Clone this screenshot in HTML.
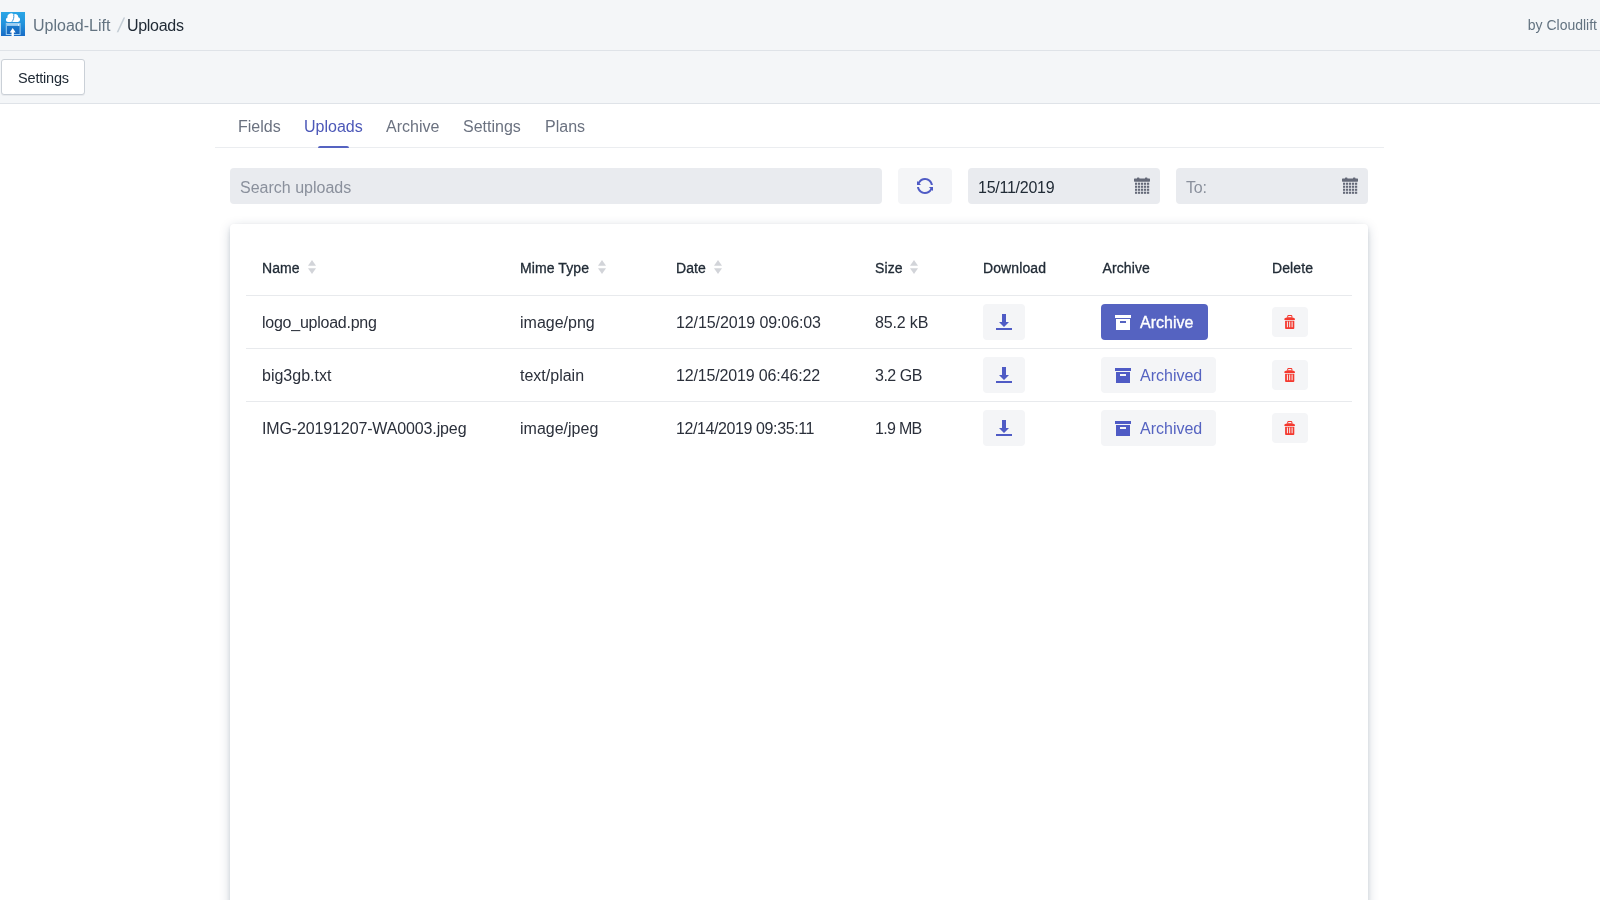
<!DOCTYPE html>
<html lang="en">
<head>
<meta charset="utf-8">
<title>Upload-Lift - Uploads</title>
<style>
*{box-sizing:border-box;margin:0;padding:0}
html,body{width:1600px;height:900px;overflow:hidden;background:#fff;font-family:"Liberation Sans",sans-serif;color:#212b36}
.topbar{position:absolute;left:0;top:0;width:1600px;height:51px;background:#f4f6f8;border-bottom:1px solid #dfe3e8}
.logo{position:absolute;left:1px;top:12px;width:24px;height:24px;background:linear-gradient(#2aa6e6,#2192dc 50%,#186cc6)}.logo svg{display:block}
.crumb{position:absolute;left:33px;top:16px;font-size:16px;line-height:20px;color:#637381;white-space:nowrap}
.crumb .sep{position:absolute;left:84.5px;top:-2px;font-size:20px;line-height:22px;color:#c4cdd5;transform:skewX(-11deg)}
.crumb b{position:absolute;left:94px;top:0;font-weight:400;color:#212b36;letter-spacing:-.3px}
.by{position:absolute;right:3px;top:15px;font-size:14px;line-height:20px;color:#637381}
.actionbar{position:absolute;left:0;top:51px;width:1600px;height:53px;background:#f4f6f8;border-bottom:1px solid #dfe3e8}
.btn-settings{position:absolute;left:1px;top:8px;width:84px;height:36px;border:1px solid #cad0d7;border-radius:3px;background:#fff;box-shadow:0 1px 0 rgba(22,29,37,.05);font-size:14.5px;line-height:36px;text-align:center;color:#212b36;padding-left:1px;letter-spacing:-.2px}
.tabs{position:absolute;left:215px;top:104px;width:1169px;height:44px;border-bottom:1px solid #ebedf0}
.tab{position:absolute;top:13px;font-size:16px;line-height:20px;color:#6b7280;white-space:nowrap}
.tab.active{color:#4c58b8}
.tab.active:after{content:"";position:absolute;left:14px;right:14px;bottom:-11px;height:2px;background:#5563c1;border-radius:2px 2px 0 0}
.search{position:absolute;left:230px;top:168px;width:652px;height:36px;background:#e9ebef;border-radius:4px;font-size:16px;line-height:40px;padding-left:10px;color:#8a909c;overflow:hidden}
.refresh{position:absolute;left:898px;top:168px;width:54px;height:36px;background:#f4f5f7;border-radius:4px}
.refresh svg{position:absolute;left:19px;top:10px}
.date{position:absolute;top:168px;width:192px;height:36px;background:#e9ebef;border-radius:4px;font-size:16px;line-height:40px;padding-left:10px;color:#212b36;letter-spacing:-.25px;overflow:hidden}
.date.to{color:#8a909c}
.date svg{position:absolute;left:166px;top:9px}
.card{position:absolute;left:230px;top:224px;width:1138px;height:700px;background:#fff;border-radius:4px;box-shadow:0 2px 4px -1px rgba(28,54,90,.16),0 3px 12px -1px rgba(28,51,84,.26)}
.th{position:absolute;top:35px;font-size:14px;line-height:18px;color:#212b36;white-space:nowrap;-webkit-text-stroke:.3px #212b36;letter-spacing:.1px}
.sort{position:absolute;top:36px;width:8px;height:14px}
.row{position:absolute;left:16px;width:1106px;height:53px;border-top:1px solid #e8eaed}
.cell{position:absolute;top:17px;font-size:16px;line-height:20px;color:#2b303b;white-space:nowrap}
.ibtn{position:absolute;background:#f4f5f7;border-radius:4px}
.dl{left:737px;top:8px;width:42px;height:36px}
.dl svg{position:absolute;left:13px;top:10px}
.ar{left:855px;top:8px;height:36px;font-size:16px;line-height:38px;color:#5563c1;padding-left:39px;white-space:nowrap}
.ar svg{position:absolute;left:14px;top:10px}
.ar.primary{width:107px;background:#5563c1;color:#fff;-webkit-text-stroke:.35px #fff}
.ar.done{width:115px}
.del{left:1026px;top:11px;width:36px;height:30px}
.del svg{position:absolute;left:12px;top:8px}
</style>
</head>
<body><div id="root" style="position:absolute;left:0;top:0;width:1600px;height:900px;will-change:transform;overflow:hidden">


<div class="topbar">
  <div class="logo"><svg width="24" height="24" viewBox="0 0 24 24"><g transform="translate(.4 -.2)"><path d="M6.600 10.200a2.300 2.300 0 0 1-.5-4.500A3.500 3.500 0 0 1 12.300 2.900a2.900 2.900 0 0 1 4.600 2.600 2.400 2.400 0 0 1-.3 4.700z" fill="#fff"/><path d="M12.300 2.900c.5 2.600-.2 5.200-1.800 7.100" fill="none" stroke="#2389d6" stroke-width=".9"/></g><rect x="5.300" y="11.500" width="13.800" height="11" fill="#0a3c9a" fill-opacity=".22" stroke="#9ccdf0" stroke-width="1"/><rect x="5.800" y="12" width="12.800" height="1.900" fill="#a2d0f1"/><rect x="17" y="12.300" width="1.300" height="1.300" fill="#fff"/><path d="M11.700 16l3 4.400h-1.850V24h-2.300v-3.600H8.700z" fill="#fff"/></svg></div>
  <div class="crumb">Upload-Lift<span class="sep">/</span><b>Uploads</b></div>
  <div class="by">by Cloudlift</div>
</div>
<div class="actionbar"><div class="btn-settings">Settings</div></div>

<div class="tabs">
  <div class="tab" style="left:23px">Fields</div>
  <div class="tab active" style="left:89px">Uploads</div>
  <div class="tab" style="left:171px">Archive</div>
  <div class="tab" style="left:248px">Settings</div>
  <div class="tab" style="left:330px">Plans</div>
</div>

<div class="search">Search uploads</div>
<div class="refresh"><svg width="16" height="16" fill="#4f5bc5" viewBox="0 0 16 16"><path d="M2.600 5.600C3.500 3.500 5.600 2 8 2c3 0 5.400 2.200 5.900 5h2C15.400 3.100 12.100 0 8 0 5 0 2.400 1.600 1.100 4.100L0 3v4h4L2.600 5.600z"/><path d="M16 9h-4.100l1.500 1.400C12.500 12.500 10.400 14 7.900 14 5 14 2.500 11.800 2 9H0c.5 3.900 3.900 7 7.900 7 3 0 5.600-1.600 6.900-4.100L16 13V9z"/></svg></div>
<div class="date" style="left:968px">15/11/2019<svg width="16" height="17" fill="#646978" viewBox="0 0 16 16"><rect x="0" y="1" width="16" height="3.200" rx=".6"/><rect x="3" y="0" width="2.400" height="2" rx=".6"/><rect x="11" y="0" width="2.400" height="2" rx=".6"/><g><rect x="1" y="5.200" width="2.200" height="2.100"/><rect x="4" y="5.200" width="2.200" height="2.100"/><rect x="7" y="5.200" width="2.200" height="2.100"/><rect x="10" y="5.200" width="2.200" height="2.100"/><rect x="13" y="5.200" width="2.200" height="2.100"/></g><g><rect x="1" y="8.200" width="2.200" height="2.100"/><rect x="4" y="8.200" width="2.200" height="2.100"/><rect x="7" y="8.200" width="2.200" height="2.100"/><rect x="10" y="8.200" width="2.200" height="2.100"/><rect x="13" y="8.200" width="2.200" height="2.100"/></g><g><rect x="1" y="11.200" width="2.200" height="2.100"/><rect x="4" y="11.200" width="2.200" height="2.100"/><rect x="7" y="11.200" width="2.200" height="2.100"/><rect x="10" y="11.200" width="2.200" height="2.100"/><rect x="13" y="11.200" width="2.200" height="2.100"/></g><g><rect x="1" y="14.200" width="2.200" height="2.100"/><rect x="4" y="14.200" width="2.200" height="2.100"/><rect x="7" y="14.200" width="2.200" height="2.100"/><rect x="10" y="14.200" width="2.200" height="2.100"/><rect x="13" y="14.200" width="2.200" height="2.100"/></g></svg></div>
<div class="date to" style="left:1176px">To:<svg width="16" height="17" fill="#646978" viewBox="0 0 16 16"><rect x="0" y="1" width="16" height="3.200" rx=".6"/><rect x="3" y="0" width="2.400" height="2" rx=".6"/><rect x="11" y="0" width="2.400" height="2" rx=".6"/><g><rect x="1" y="5.200" width="2.200" height="2.100"/><rect x="4" y="5.200" width="2.200" height="2.100"/><rect x="7" y="5.200" width="2.200" height="2.100"/><rect x="10" y="5.200" width="2.200" height="2.100"/><rect x="13" y="5.200" width="2.200" height="2.100"/></g><g><rect x="1" y="8.200" width="2.200" height="2.100"/><rect x="4" y="8.200" width="2.200" height="2.100"/><rect x="7" y="8.200" width="2.200" height="2.100"/><rect x="10" y="8.200" width="2.200" height="2.100"/><rect x="13" y="8.200" width="2.200" height="2.100"/></g><g><rect x="1" y="11.200" width="2.200" height="2.100"/><rect x="4" y="11.200" width="2.200" height="2.100"/><rect x="7" y="11.200" width="2.200" height="2.100"/><rect x="10" y="11.200" width="2.200" height="2.100"/><rect x="13" y="11.200" width="2.200" height="2.100"/></g><g><rect x="1" y="14.200" width="2.200" height="2.100"/><rect x="4" y="14.200" width="2.200" height="2.100"/><rect x="7" y="14.200" width="2.200" height="2.100"/><rect x="10" y="14.200" width="2.200" height="2.100"/><rect x="13" y="14.200" width="2.200" height="2.100"/></g></svg></div>

<div class="card">
  <div class="th" style="left:32px">Name</div><svg class="sort" style="left:78px" fill="#d2d4d9" viewBox="0 0 8 14"><path d="M4 0L8 5.800H0z"/><path d="M4 14L8 8.200H0z"/></svg>
  <div class="th" style="left:290px">Mime Type</div><svg class="sort" style="left:368px" fill="#d2d4d9" viewBox="0 0 8 14"><path d="M4 0L8 5.800H0z"/><path d="M4 14L8 8.200H0z"/></svg>
  <div class="th" style="left:446px">Date</div><svg class="sort" style="left:484px" fill="#d2d4d9" viewBox="0 0 8 14"><path d="M4 0L8 5.800H0z"/><path d="M4 14L8 8.200H0z"/></svg>
  <div class="th" style="left:645px">Size</div><svg class="sort" style="left:680px" fill="#d2d4d9" viewBox="0 0 8 14"><path d="M4 0L8 5.800H0z"/><path d="M4 14L8 8.200H0z"/></svg>
  <div class="th" style="left:753px">Download</div>
  <div class="th" style="left:872.5px">Archive</div>
  <div class="th" style="left:1042px">Delete</div>

  <div class="row" style="top:71px">
    <div class="cell" style="left:16px;letter-spacing:-.25px">logo_upload.png</div>
    <div class="cell" style="left:274px">image/png</div>
    <div class="cell" style="left:430px;letter-spacing:-.1px">12/15/2019 09:06:03</div>
    <div class="cell" style="left:629px;letter-spacing:-.15px">85.2 kB</div>
    <div class="ibtn dl"><svg width="16" height="16" fill="#4f5bc5" viewBox="0 0 16 16"><path d="M0 14h16v2H0z"/><path d="M8 13l5-5h-3V0H6v8H3z"/></svg></div>
    <div class="ibtn ar primary"><svg width="16" height="16" fill="#fff" viewBox="0 0 16 16"><path d="M0 1h16v3H0z"/><path d="M1 5v11h14V5H1zm10 4H5V7h6v2z"/></svg>Archive</div>
    <div class="ibtn del"><svg width="11" height="14" fill="#f4392f" viewBox="0 0 11 14"><path d="M3.200 2.500V1.300C3.200.600 3.800 0 4.500 0h2.600c.7 0 1.300.6 1.300 1.300v1.200h-1V1.400c0-.2-.2-.4-.4-.4H4.600c-.2 0-.4.2-.4.4v1.100z"/><path d="M.4 3.700C.4 2.900 2.600 2.200 5.650 2.200s5.250.7 5.250 1.500v1.400H.4z"/><path fill-rule="evenodd" d="M1.100 5.700h9.200v7.200c0 .6-.5 1.100-1.100 1.100H2.200c-.6 0-1.100-.5-1.100-1.100zM2.900 6.600v5.600h1V6.600zm2.300 0v5.600h1V6.600zm2.400 0v5.600h1V6.600z"/></svg></div>
  </div>
  <div class="row" style="top:124px">
    <div class="cell" style="left:16px">big3gb.txt</div>
    <div class="cell" style="left:274px">text/plain</div>
    <div class="cell" style="left:430px;letter-spacing:-.15px">12/15/2019 06:46:22</div>
    <div class="cell" style="left:629px;letter-spacing:-.5px">3.2 GB</div>
    <div class="ibtn dl"><svg width="16" height="16" fill="#4f5bc5" viewBox="0 0 16 16"><path d="M0 14h16v2H0z"/><path d="M8 13l5-5h-3V0H6v8H3z"/></svg></div>
    <div class="ibtn ar done"><svg width="16" height="16" fill="#4f5bc5" viewBox="0 0 16 16"><path d="M0 1h16v3H0z"/><path d="M1 5v11h14V5H1zm10 4H5V7h6v2z"/></svg>Archived</div>
    <div class="ibtn del"><svg width="11" height="14" fill="#f4392f" viewBox="0 0 11 14"><path d="M3.200 2.500V1.300C3.200.600 3.800 0 4.500 0h2.600c.7 0 1.300.6 1.300 1.300v1.200h-1V1.400c0-.2-.2-.4-.4-.4H4.600c-.2 0-.4.2-.4.4v1.100z"/><path d="M.4 3.700C.4 2.900 2.600 2.200 5.650 2.200s5.250.7 5.250 1.500v1.400H.4z"/><path fill-rule="evenodd" d="M1.100 5.700h9.200v7.200c0 .6-.5 1.100-1.100 1.100H2.200c-.6 0-1.100-.5-1.100-1.100zM2.900 6.600v5.600h1V6.600zm2.300 0v5.600h1V6.600zm2.400 0v5.600h1V6.600z"/></svg></div>
  </div>
  <div class="row" style="top:177px">
    <div class="cell" style="left:16px;letter-spacing:-.13px">IMG-20191207-WA0003.jpeg</div>
    <div class="cell" style="left:274px">image/jpeg</div>
    <div class="cell" style="left:430px;letter-spacing:-.4px">12/14/2019 09:35:11</div>
    <div class="cell" style="left:629px;letter-spacing:-.7px">1.9 MB</div>
    <div class="ibtn dl"><svg width="16" height="16" fill="#4f5bc5" viewBox="0 0 16 16"><path d="M0 14h16v2H0z"/><path d="M8 13l5-5h-3V0H6v8H3z"/></svg></div>
    <div class="ibtn ar done"><svg width="16" height="16" fill="#4f5bc5" viewBox="0 0 16 16"><path d="M0 1h16v3H0z"/><path d="M1 5v11h14V5H1zm10 4H5V7h6v2z"/></svg>Archived</div>
    <div class="ibtn del"><svg width="11" height="14" fill="#f4392f" viewBox="0 0 11 14"><path d="M3.200 2.500V1.300C3.200.600 3.800 0 4.500 0h2.600c.7 0 1.300.6 1.300 1.300v1.200h-1V1.400c0-.2-.2-.4-.4-.4H4.600c-.2 0-.4.2-.4.4v1.100z"/><path d="M.4 3.700C.4 2.900 2.600 2.200 5.650 2.200s5.250.7 5.250 1.500v1.400H.4z"/><path fill-rule="evenodd" d="M1.100 5.700h9.200v7.200c0 .6-.5 1.100-1.100 1.100H2.200c-.6 0-1.100-.5-1.100-1.100zM2.900 6.600v5.600h1V6.600zm2.300 0v5.600h1V6.600zm2.400 0v5.600h1V6.600z"/></svg></div>
  </div>
</div>
</div></body>
</html>
